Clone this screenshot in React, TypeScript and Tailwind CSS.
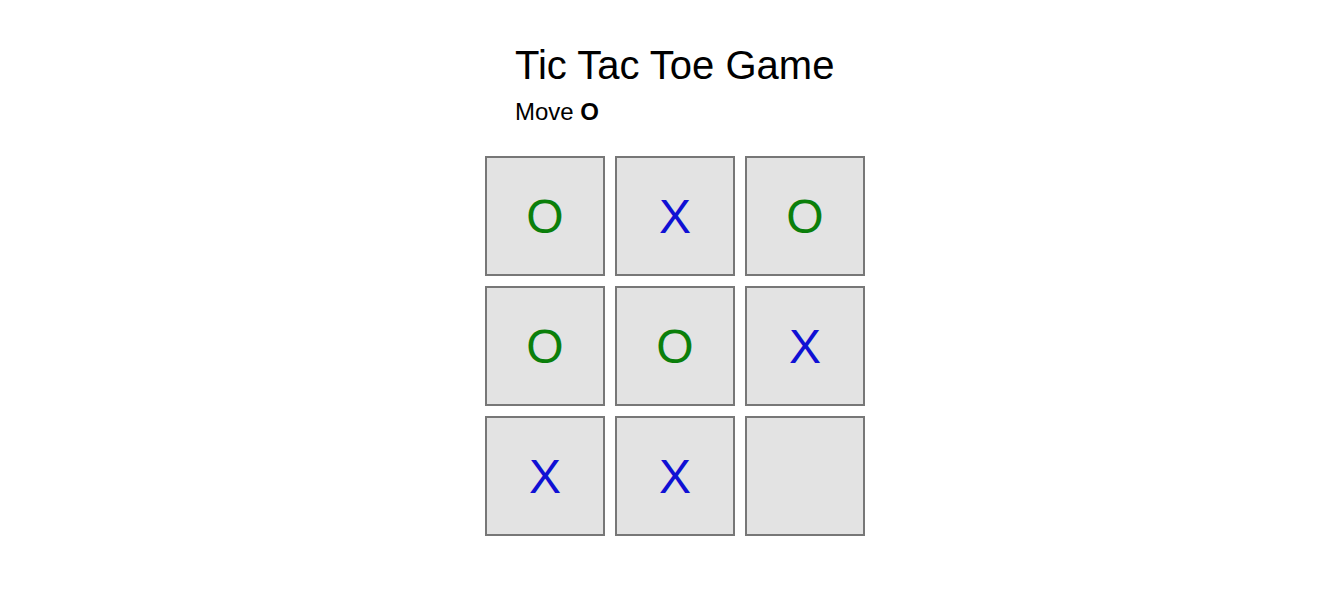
import { useState } from "react";

type Cell = "X" | "O" | null;

const initialBoard: Cell[] = ["O", "X", "O", "O", "O", "X", "X", "X", null];

export default function App() {
  const [board, setBoard] = useState<Cell[]>(initialBoard);
  const [next, setNext] = useState<"X" | "O">("O");

  const play = (i: number) => {
    if (board[i]) return;
    const copy = [...board];
    copy[i] = next;
    setBoard(copy);
    setNext(next === "X" ? "O" : "X");
  };

  return (
    <div className="min-h-screen bg-white font-['Liberation_Sans',Arial,sans-serif] text-black">
      <div className="ml-[485px] w-[380px] pt-[42px]">
        <div className="pl-[30px]">
          <h1 className="text-[40px] leading-[46px]">Tic Tac Toe Game</h1>
          <p className="mt-[10px] text-[24px] leading-[27px]">
            Move <b>{next}</b>
          </p>
        </div>

        {/* Board */}
        <div className="mt-[31px] grid grid-cols-3 gap-[10px]">
          {board.map((cell, i) => (
            <button
              key={i}
              onClick={() => play(i)}
              className={
                "flex h-[120px] w-[120px] items-center justify-center border-2 border-[#777777] bg-[#e3e3e3] pt-[2px] text-[48px] leading-none " +
                (cell === "O" ? "text-[#0b7f0b]" : "text-[#1010d4]")
              }
            >
              {cell}
            </button>
          ))}
        </div>
      </div>
    </div>
  );
}
